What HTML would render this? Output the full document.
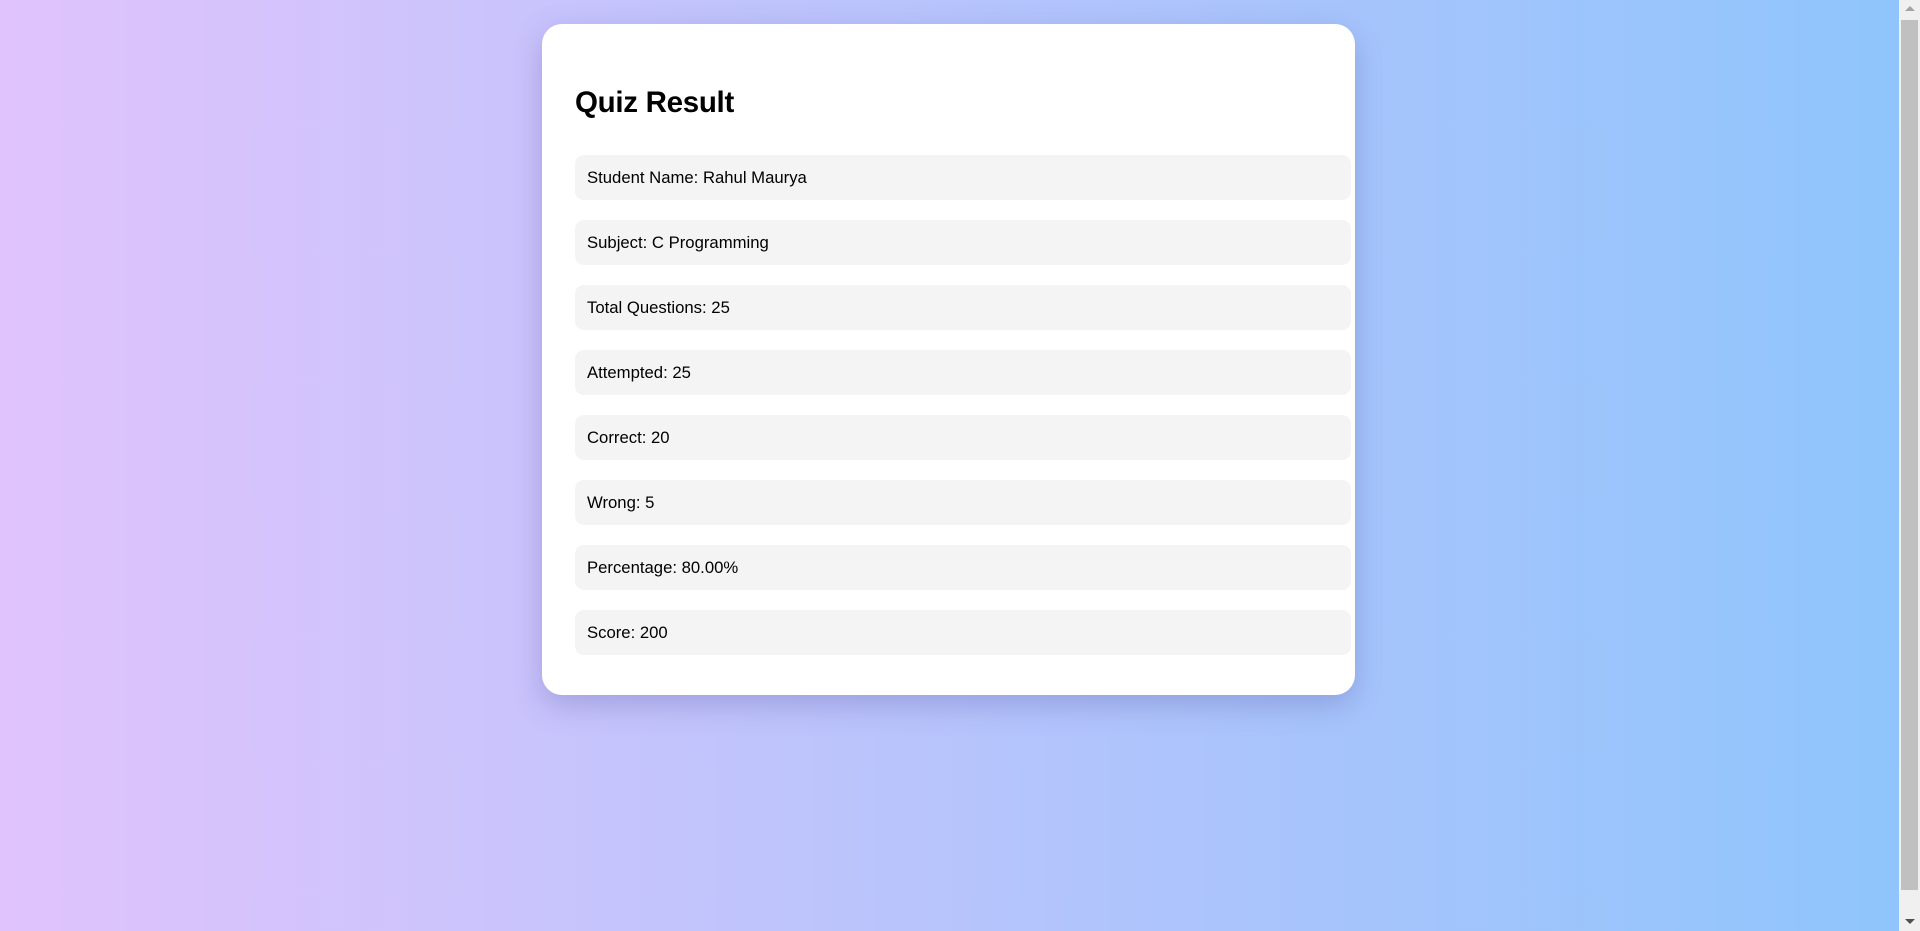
<!DOCTYPE html>
<html><head><meta charset="utf-8"><style>
html,body{margin:0;padding:0;width:1920px;height:931px;overflow:hidden}
body{background:linear-gradient(to right,#e0c3fc,#8ec5fc);font-family:"Liberation Sans",Arial,sans-serif;position:relative}
.card{position:absolute;left:542px;top:24px;width:813px;height:671px;background:#fff;border-radius:20px;box-shadow:0 10px 30px rgba(80,80,160,0.3)}
h1{position:absolute;left:33px;top:62px;margin:0;font-size:29.5px;font-weight:bold;color:#000;letter-spacing:-0.3px}
.row{position:absolute;left:33px;width:764px;height:45px;background:#f4f4f4;border-radius:9px;padding-left:12px;line-height:45px;font-size:16.7px;color:#000}
.sb{position:absolute;left:1899px;top:0;width:21px;height:931px;background:#f0f0f0}
.th{position:absolute;left:2px;top:20px;width:17px;height:870px;background:#c0c0c0}
.up{position:absolute;left:6px;top:6px;width:0;height:0;border-left:5px solid transparent;border-right:5px solid transparent;border-bottom:5px solid #a3a3a3}
.dn{position:absolute;left:6px;top:919px;width:0;height:0;border-left:5px solid transparent;border-right:5px solid transparent;border-top:5px solid #505050}
</style></head><body>
<div class="card">
<h1>Quiz Result</h1>
<div class="row" style="top:131px">Student Name: Rahul Maurya</div>
<div class="row" style="top:196px">Subject: C Programming</div>
<div class="row" style="top:261px">Total Questions: 25</div>
<div class="row" style="top:326px">Attempted: 25</div>
<div class="row" style="top:391px">Correct: 20</div>
<div class="row" style="top:456px">Wrong: 5</div>
<div class="row" style="top:521px">Percentage: 80.00%</div>
<div class="row" style="top:586px">Score: 200</div>
</div>
<div class="sb"><div class="up"></div><div class="th"></div><div class="dn"></div></div>
</body></html>
